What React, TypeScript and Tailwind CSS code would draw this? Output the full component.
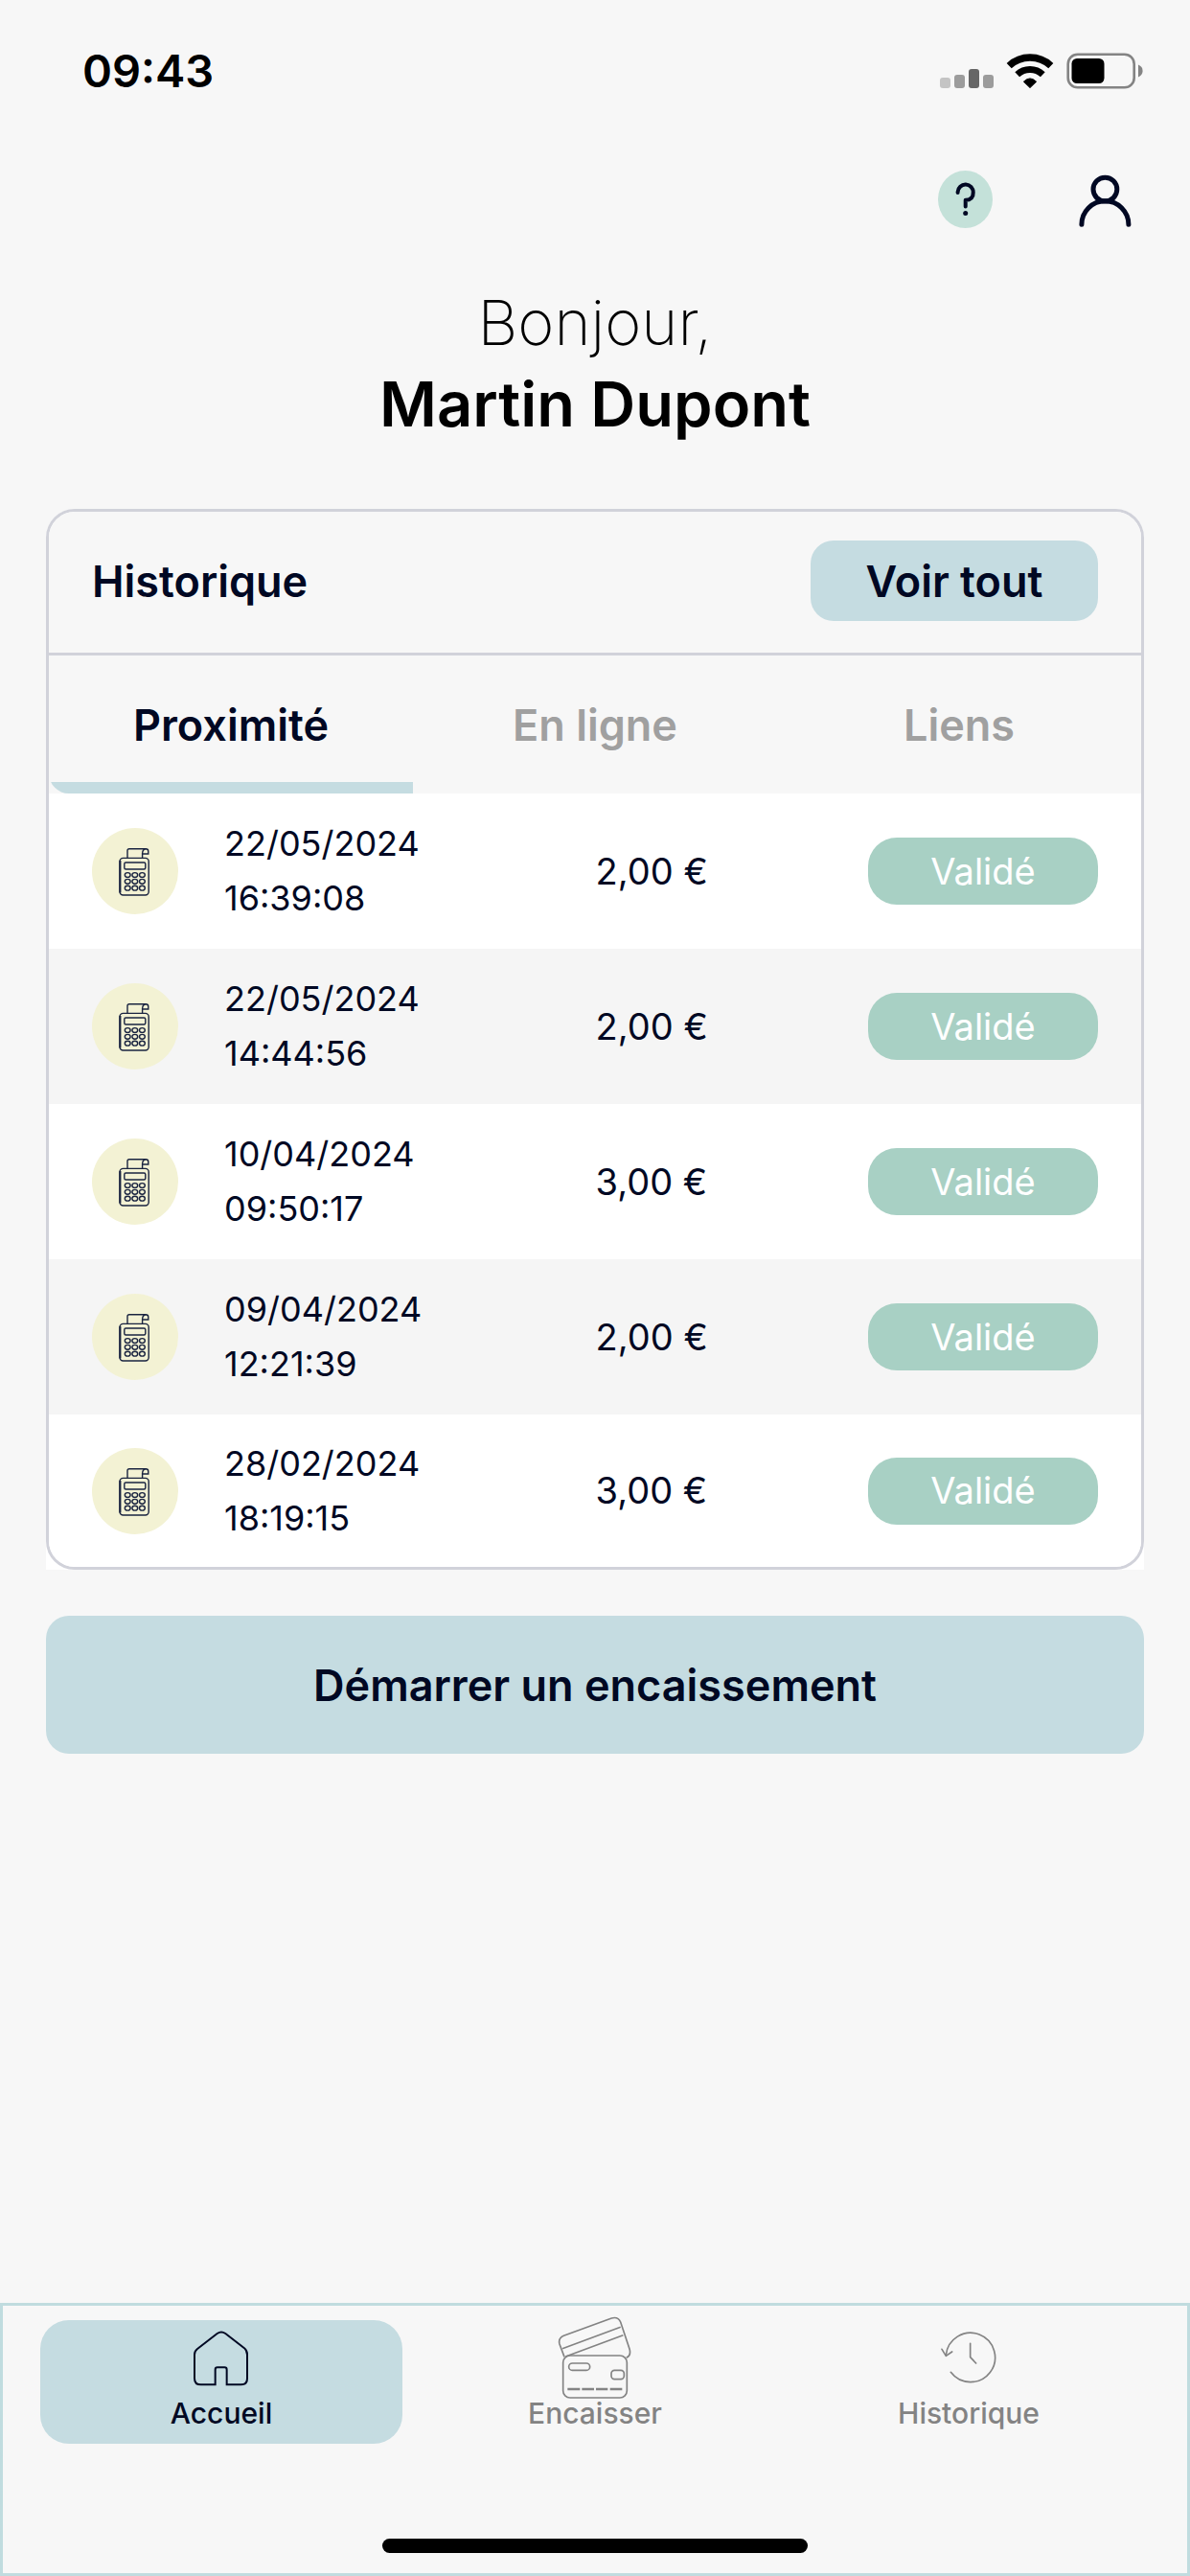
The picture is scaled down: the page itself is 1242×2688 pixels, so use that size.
import { useState } from 'react'

type Transaction = {
  id: number
  date: string
  time: string
  amount: string
  status: string
}

const TABS = ['Proximité', 'En ligne', 'Liens']

const TRANSACTIONS: Transaction[] = [
  { id: 1, date: '22/05/2024', time: '16:39:08', amount: '2,00 €', status: 'Validé' },
  { id: 2, date: '22/05/2024', time: '14:44:56', amount: '2,00 €', status: 'Validé' },
  { id: 3, date: '10/04/2024', time: '09:50:17', amount: '3,00 €', status: 'Validé' },
  { id: 4, date: '09/04/2024', time: '12:21:39', amount: '2,00 €', status: 'Validé' },
  { id: 5, date: '28/02/2024', time: '18:19:15', amount: '3,00 €', status: 'Validé' },
]

function SignalIcon() {
  return (
    <svg width="56" height="38" viewBox="0 0 56 38" aria-hidden="true">
      <rect x="0" y="26" width="11" height="11" rx="3" fill="#c4c4c4" />
      <rect x="15" y="23" width="11" height="14" rx="3" fill="#9c9c9c" />
      <rect x="30" y="17" width="11" height="20" rx="3" fill="#666666" />
      <rect x="45" y="23" width="11" height="14" rx="3" fill="#9c9c9c" />
    </svg>
  )
}

function WifiIcon() {
  return (
    <svg width="50" height="38" viewBox="-1 -1 50 38" fill="none" stroke="#000" aria-hidden="true">
      <path d="M2.2 12.6A32 32 0 0 1 45.8 12.6" strokeWidth="7.4" />
      <path d="M10.7 21.7A19.5 19.5 0 0 1 37.3 21.7" strokeWidth="7" />
      <path d="M17.4 29.2Q24 22.6 30.6 29.2L24 35.6Z" fill="#000" strokeWidth="1" strokeLinejoin="round" />
    </svg>
  )
}

function BatteryIcon() {
  return (
    <svg width="80" height="38" viewBox="0 0 80 38" aria-hidden="true">
      <rect x="1.7" y="1.7" width="69" height="34.6" rx="10" fill="none" stroke="#848484" strokeWidth="2.6" />
      <rect x="5.5" y="6" width="34" height="26" rx="5.5" fill="#000" />
      <path d="M75 12.6Q79.6 14.6 79.6 19T75 25.4Z" fill="#848484" />
    </svg>
  )
}

function HelpIcon() {
  return (
    <svg width="57" height="60" viewBox="0 0 57 60" fill="none" aria-hidden="true">
      <ellipse cx="28.5" cy="30" rx="28.5" ry="30" fill="#c4e1d9" />
      <path
        d="M20.6 23V22.3A8 8 0 0 1 36.7 23C36.7 28.4 33.4 30.8 28.7 30.8V37.4"
        stroke="#000823" strokeWidth="4" strokeLinecap="round" strokeLinejoin="round"
      />
      <circle cx="28.7" cy="44.4" r="2.5" fill="#000823" />
    </svg>
  )
}

function UserIcon() {
  return (
    <svg width="60" height="60" viewBox="0 0 60 60" fill="none" stroke="#000823" strokeWidth="5" strokeLinecap="round" aria-hidden="true">
      <circle cx="30.4" cy="19.6" r="12.4" />
      <path d="M5.9 56.3A24.5 24.5 0 0 1 54.9 56.3" />
    </svg>
  )
}

function TerminalIcon() {
  return (
    <svg width="90" height="90" viewBox="0 0 90 90" fill="none" stroke="#1a2440" strokeWidth="1.4" aria-hidden="true">
      <circle cx="45" cy="45" r="45" fill="#f3f2d4" stroke="none" />
      <rect x="29" y="31.4" width="30.2" height="38.6" rx="3.5" />
      <path d="M29.4 34V67.5" strokeWidth="2" />
      <path d="M37 31V23.6Q37 21.8 39 21.8H56Q58.8 21.8 58.8 24.4V27H52.6V31" />
      <path d="M56.4 21.8Q52.6 22 52.6 27" />
      <rect x="33.8" y="36" width="22" height="7" rx="1.5" />
      {[49, 55.8, 62.7].map(y =>
        [37.2, 44.8, 52.4].map(x => <ellipse key={`${x}-${y}`} cx={x} cy={y} rx="2.9" ry="2.4" />)
      )}
    </svg>
  )
}

function HomeIcon() {
  return (
    <svg className="shrink-0" width="60" height="60" viewBox="0 0 180 180" fill="none" stroke="currentColor" strokeWidth="6" aria-hidden="true">
      <path d="M71 172H26Q6 172 6 152V78Q6 67 15 60L77 12Q90 3 103 12L162 58Q171 65 171 78V152Q171 172 151 172H107V125Q107 118 100 118H78Q71 118 71 125Z" />
    </svg>
  )
}

function CardsIcon() {
  return (
    <svg className="shrink-0" width="80" height="90" viewBox="0 0 240 270" fill="none" stroke="currentColor" strokeWidth="5" aria-hidden="true">
      <path d="M24 130L9 90Q4 72 22 64L172 9Q192 3 200 21L228 105Q234 125 218 133" />
      <path d="M18 104L200 37M28 129L208 62" />
      <rect x="20" y="126" width="200" height="132" rx="22" />
      <rect x="38" y="150" width="66" height="22" rx="11" />
      <rect x="171" y="172" width="40" height="28" rx="10" />
      <path d="M34 231H73M79 231H117M123 231H160M167 231H205" strokeWidth="7" />
    </svg>
  )
}

function HistoryIcon() {
  return (
    <svg className="shrink-0" width="60" height="60" viewBox="0 0 180 180" fill="none" stroke="currentColor" strokeWidth="5" strokeLinecap="round" strokeLinejoin="round" aria-hidden="true">
      <path d="M19 80A77 77 0 1 1 34 133" />
      <path d="M6 61L19 82L38 69" />
      <path d="M95 43V86L113 105" />
    </svg>
  )
}

const NAV = [
  { label: 'Accueil', Icon: HomeIcon },
  { label: 'Encaisser', Icon: CardsIcon },
  { label: 'Historique', Icon: HistoryIcon },
]

function TransactionRow({ tx }: { tx: Transaction }) {
  return (
    <tr className="h-[162px] bg-white even:bg-[#f5f5f5] last:h-[159px]">
      <td className="w-[183px] pl-[45px]">
        <TerminalIcon />
      </td>
      <td className="w-[34%] text-[36px] leading-[57px]">
        <div>{tx.date}</div>
        <div>{tx.time}</div>
      </td>
      <td className="text-[38px] leading-[57px]">{tx.amount}</td>
      <td className="w-[285px] pr-[45px]">
        <div className="flex h-[70px] items-center justify-center rounded-[30px] bg-[#a8d0c4] text-[38px] text-white">
          {tx.status}
        </div>
      </td>
    </tr>
  )
}

export default function App() {
  const [tab, setTab] = useState('Proximité')
  const [page, setPage] = useState('Accueil')

  return (
    <div className="flex min-h-screen flex-col bg-[#f7f7f7] font-['Inter',sans-serif] text-[#000823]">
      <div className="flex h-[148px] items-center justify-between pr-[49px] pl-[86px]">
        <span className="text-[47px] font-semibold text-black">09:43</span>
        <div className="flex items-center gap-[13px]">
          <SignalIcon />
          <WifiIcon />
          <BatteryIcon />
        </div>
      </div>

      <header>
        <div className="flex justify-end gap-[87px] px-[59px] pt-[30px]">
          <button type="button" aria-label="Aide"><HelpIcon /></button>
          <button type="button" aria-label="Mon compte"><UserIcon /></button>
        </div>
        <h1 className="mt-[56px] text-center text-[65px] leading-[85px] text-black">
          <span className="block font-extralight">Bonjour,</span>
          <span className="block font-semibold">Martin Dupont</span>
        </h1>
      </header>

      <main className="mt-[67px] px-[48px]">
        <div className="rounded-t-[30px] bg-white">
          <section className="overflow-hidden rounded-[30px] border-[3px] border-[#d1d2da]">
            <div className="flex items-center justify-between border-b-[3px] border-[#d1d2da] bg-[#f7f7f7] px-[45px] pt-[30px] pb-[33px]">
              <h2 className="text-[45px] leading-[63px] font-semibold">Historique</h2>
              <button type="button" className="h-[84px] w-[300px] rounded-[24px] bg-[#c5dce1] text-[45px] leading-[63px] font-semibold">
                Voir tout
              </button>
            </div>
            <div role="tablist" className="grid grid-cols-3 bg-[#f7f7f7]">
              {TABS.map(name => (
                <button
                  key={name}
                  type="button"
                  role="tab"
                  aria-selected={tab === name}
                  onClick={() => setTab(name)}
                  className={`flex h-[144px] flex-col overflow-hidden rounded-bl-[21px] text-[45px] leading-[63px] font-semibold ${tab === name ? '' : 'text-[#a0a0a0]'}`}
                >
                  <span className="flex w-full flex-1 items-center justify-center pt-[12px]">{name}</span>
                  <span className={`h-[12px] w-full ${tab === name ? 'bg-[#c5dce1]' : ''}`} />
                </button>
              ))}
            </div>
            <table className="w-full table-fixed border-collapse text-left">
              <tbody>
                {TRANSACTIONS.map(tx => <TransactionRow key={tx.id} tx={tx} />)}
              </tbody>
            </table>
          </section>
        </div>
        <button type="button" className="mt-[48px] h-[144px] w-full rounded-[24px] bg-[#c5dce1] text-[45px] leading-[63px] font-semibold">
          Démarrer un encaissement
        </button>
      </main>

      <nav className="mt-auto border-[3px] border-[#c0dcdf] pt-[15px] pb-[21px]">
        <div className="grid grid-cols-3 gap-[12px] px-[39px]">
          {NAV.map(({ label, Icon }) => (
            <button
              key={label}
              type="button"
              onClick={() => setPage(label)}
              className={`flex h-[129px] flex-col items-center rounded-[30px] ${page === label ? 'bg-[#c5dce1]' : 'text-[#838383]'}`}
            >
              <span className="flex h-[79px] items-center justify-center"><Icon /></span>
              <span className="text-[30px] leading-[36px] font-medium">{label}</span>
            </button>
          ))}
        </div>
        <div className="mx-auto mt-[99px] h-[15px] w-[36%] rounded-full bg-black" />
      </nav>
    </div>
  )
}
